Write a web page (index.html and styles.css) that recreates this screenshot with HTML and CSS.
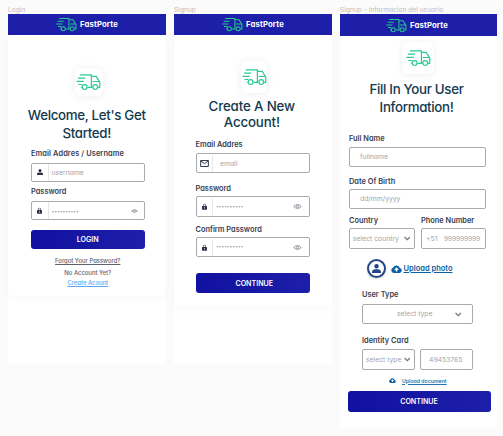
FILE: index.html
```
<!DOCTYPE html>
<html lang="en">
<head>
<meta charset="utf-8">
<title>FastPorte</title>
<link rel="stylesheet" href="styles.css">
</head>
<body>
<svg class="defs" width="0" height="0" aria-hidden="true">
  <symbol id="truck" viewBox="0 0 26 18"><g fill="none" stroke="currentColor" stroke-width="1.25"><path d="M4 1.5H16V14.5H12M2 5H9.5M.5 8.3H8M2.5 11.6H6.5M5 14.5H6M16 3.2H21L24.7 9V14.5H23M16 14.5H17M17.3 8.5H24"/><circle cx="9" cy="14.3" r="2.5"/><circle cx="20" cy="14.3" r="2.5"/></g></symbol>
  <symbol id="lock" viewBox="0 0 16 20"><path fill="currentColor" d="M2 8H3V6a5 5 0 0 1 10 0V8H14a2 2 0 0 1 2 2V18a2 2 0 0 1-2 2H2a2 2 0 0 1-2-2V10a2 2 0 0 1 2-2ZM5 8H11V6a3 3 0 0 0-6 0ZM8 12a2 2 0 1 0 0 4a2 2 0 0 0 0-4Z"/></symbol>
  <symbol id="person" viewBox="0 0 16 16"><path fill="currentColor" d="M8 0a4 4 0 1 1 0 8a4 4 0 0 1 0-8ZM0 16V14C0 10.5 4 9.5 8 9.5S16 10.5 16 14V16Z"/></symbol>
  <symbol id="mail" viewBox="0 0 20 16"><path fill="none" stroke="currentColor" stroke-width="2.2" d="M1.2 1.2H18.8V14.8H1.2ZM1.2 2L10 8.5L18.8 2"/></symbol>
  <symbol id="eye" viewBox="0 0 24 14"><path fill="none" stroke="currentColor" stroke-width="2.2" d="M1.5 7Q12-3.5 22.5 7Q12 17.5 1.5 7Z"/><circle cx="12" cy="7" r="3" fill="none" stroke="currentColor" stroke-width="2"/></symbol>
  <symbol id="chevron" viewBox="0 0 12 8"><path fill="none" stroke="currentColor" stroke-width="2.4" d="M1 1.3L6 6.2L11 1.3"/></symbol>
  <symbol id="cloud" viewBox="0 0 24 17"><path fill="currentColor" fill-rule="evenodd" d="M6 17a6 6 0 0 1-1.2-11.7A7.5 7.5 0 0 1 19 6.5A5.3 5.3 0 0 1 18.5 17ZM12 4.5L6.8 10H10.3V14H13.7V10H17.2Z"/></symbol>
</svg>
<main class="board">
  <section class="screen">
    <div class="frame-name">Login</div>
    <div class="frame">
      <header class="bar"><svg class="bar-logo"><use href="#truck"/></svg><span class="brand">FastPorte</span></header>
      <div class="card login">
        <div class="tile"><svg><use href="#truck"/></svg></div>
        <h1>Welcome, Let's Get<br>Started!</h1>
        <form>
          <label class="address">Email Addres / Username</label>
          <div class="field"><span class="lead"><svg class="i-person"><use href="#person"/></svg></span><span class="value">username</span></div>
          <label>Password</label>
          <div class="field"><span class="lead"><svg class="i-lock"><use href="#lock"/></svg></span><span class="value dots">••••••••••</span><svg class="i-eye"><use href="#eye"/></svg></div>
          <div class="button">LOGIN</div>
        </form>
        <div class="links"><a>Forgot Your Password?</a><span class="noacc">No Account Yet?</span><a class="create">Create Acount</a></div>
      </div>
    </div>
  </section>
  <section class="screen">
    <div class="frame-name">Signup</div>
    <div class="frame">
      <header class="bar"><svg class="bar-logo"><use href="#truck"/></svg><span class="brand">FastPorte</span></header>
      <div class="card signup">
        <div class="tile"><svg><use href="#truck"/></svg></div>
        <h1>Create A New<br>Account!</h1>
        <form>
          <label>Email Addres</label>
          <div class="field"><span class="lead"><svg class="i-mail"><use href="#mail"/></svg></span><span class="value email">email</span></div>
          <label class="pw">Password</label>
          <div class="field"><span class="lead"><svg class="i-lock"><use href="#lock"/></svg></span><span class="value dots">••••••••••</span><svg class="i-eye"><use href="#eye"/></svg></div>
          <label class="confirm">Confirm Password</label>
          <div class="field"><span class="lead"><svg class="i-lock"><use href="#lock"/></svg></span><span class="value dots">••••••••••</span><svg class="i-eye"><use href="#eye"/></svg></div>
          <div class="button">CONTINUE</div>
        </form>
      </div>
    </div>
  </section>
  <section class="screen">
    <div class="frame-name">Signup - informacion del usuario</div>
    <div class="frame tall">
      <header class="bar"><svg class="bar-logo"><use href="#truck"/></svg><span class="brand">FastPorte</span></header>
      <div class="card info">
        <div class="tile"><svg><use href="#truck"/></svg></div>
        <h1>Fill In Your User<br>Information!</h1>
        <form>
          <label>Full Name</label>
          <div class="field"><span class="value indent">fullname</span></div>
          <label class="dob">Date Of Birth</label>
          <div class="field"><span class="value indent">dd/mm/yyyy</span></div>
          <div class="pair">
            <div><label>Country</label><div class="field select"><span>select country</span><svg class="i-chev"><use href="#chevron"/></svg></div></div>
            <div><label>Phone Number</label><div class="field number"><span>+51</span><span class="digits">999999999</span></div></div>
          </div>
        </form>
        <div class="upload"><span class="avatar"><svg><use href="#person"/></svg></span><svg class="i-cloud"><use href="#cloud"/></svg><a class="photo">Upload photo</a></div>
        <div class="inner">
          <label>User Type</label>
          <div class="field type"><span>select type</span><svg class="i-chev"><use href="#chevron"/></svg></div>
          <label class="identity">Identity Card</label>
          <div class="ids"><div class="field select"><span>select type</span><svg class="i-chev"><use href="#chevron"/></svg></div><div class="field idnumber"><span>49453765</span></div></div>
          <div class="document"><svg class="i-cloud small"><use href="#cloud"/></svg><a class="doc">Upload document</a></div>
        </div>
      </div>
      <div class="button wide">CONTINUE</div>
    </div>
  </section>
</main>
</body>
</html>
```
FILE: styles.css
```
* { box-sizing: border-box; }
body { margin: 0; width: 503px; height: 436px; overflow: hidden; background: #fbfbfb; font-family: Inter, "Open Sans", sans-serif; font-feature-settings: "cv11"; color: #394052; }
.defs { display: block; height: 0; }
svg { display: block; flex: none; }
span, a, label { white-space: nowrap; }
.board { display: grid; grid-template-columns: 158px 158px 157px; column-gap: 8px; padding: 4px 0 0 8px; align-items: start; }
.frame-name { height: 10px; line-height: 12px; font-size: 6.6px; color: #bcbcbc; letter-spacing: .03px; white-space: nowrap; }
.frame { height: 350px; background: #fff; }
.tall { height: 414px; }
.bar { display: flex; height: 21px; align-items: center; padding-left: 48px; background: #1d1fa9; color: #fff; }
.bar-logo { width: 21px; height: 15px; color: #23cb8d; }
.brand { margin-left: 3px; font-size: 7.7px; font-weight: 700; letter-spacing: .15px; }
.screen:nth-child(3) .bar { height: 22px; padding-left: 46px; }
.card { border-radius: 0 0 5px 5px; box-shadow: 0 3px 10px #00000007; }
.login { height: 261px; padding: 33px 21.5px 0 23px; }
.signup { height: 271px; padding: 26px 22px 0 21.5px; }
.info { height: 352px; padding: 6px 11px 0 9px; box-shadow: none; }
.tile { display: flex; width: 28px; height: 28px; margin-left: 43.5px; align-items: center; justify-content: center; border-radius: 6px; background: #fff; box-shadow: 0 1px 9px #00000012; color: #2bcb96; }
.tile svg { width: 25px; height: 18px; }
.signup .tile { width: 26px; height: 32px; margin-left: 45.5px; }
.info .tile { width: 32px; height: 32px; margin-left: 53px; }
h1 { margin: 10px -15px 0 -17px; font-size: 13.3px; line-height: 18px; font-weight: 500; letter-spacing: -.32px; text-align: center; color: #12394d; }
.signup h1 { margin-top: 4.5px; line-height: 16.7px; letter-spacing: -.15px; }
.info h1 { margin-top: 5.5px; }
form, .inner { display: flex; flex-direction: column; }
label { display: block; height: 10px; line-height: 10px; font-size: 7.4px; font-weight: 600; color: #394052; }
.address { letter-spacing: .1px; }
.login form { padding-top: 6.5px; }
.login label { margin-bottom: 4px; }
.login .field { height: 19px; }
.login .field + label { margin-top: 5.5px; }
.login .button { height: 19px; margin-top: 10px; }
.field { display: flex; align-items: center; height: 20.5px; border: 1px solid #aaaaad; border-radius: 2px; color: #a3a4ae; font-size: 6.8px; }
.lead { display: flex; width: 16.5px; height: 17px; align-items: center; justify-content: center; border-right: 1px solid #e7e7e9; color: #2b3145; }
.value { margin-left: 3px; }
.i-person { width: 6px; height: 6px; }
.i-lock { width: 5px; height: 7px; }
.i-mail { width: 9px; height: 7px; }
.i-eye { width: 7px; height: 4px; margin-left: auto; margin-right: 6px; color: #777c88; }
.signup .i-eye { width: 9px; height: 5px; margin-right: 7px; }
.value.email { margin-left: 7px; }
.dots { font-size: 5px; letter-spacing: -.1px; }
.signup .dots { padding-bottom: 2px; }
.button { display: flex; align-items: center; justify-content: center; height: 20.5px; border-radius: 3px; background: linear-gradient(90deg, #10119f, #1d1fa9); color: #fff; font-size: 7.1px; font-weight: 600; }
.links { display: flex; flex-direction: column; align-items: center; padding-top: 7px; font-size: 5.9px; line-height: 10px; font-weight: 500; color: #60616f; }
.links a, .photo, .doc { text-decoration: underline; text-underline-offset: 1px; text-decoration-thickness: .5px; }
.noacc { margin-top: 2px; }
.links .create { color: #59a5f5; }
.signup form { padding-top: 9px; }
.signup label { margin-bottom: 3px; }
.signup .pw { margin-top: 11px; margin-bottom: 2px; }
.signup .confirm { margin-top: 8px; margin-bottom: 2px; }
.signup .button { margin-top: 15.5px; padding-left: 3px; }
.info form { padding-top: 18px; }
.info label { margin-bottom: 3px; }
.info .dob { margin-top: 9.5px; margin-bottom: 2px; }
.indent { margin-left: 10px; }
.pair { display: grid; grid-template-columns: 66px 65px; justify-content: space-between; padding-top: 7px; }
.info .pair label { margin-bottom: 2px; }
.select { justify-content: space-between; padding: 0 4px 0 3px; }
.i-chev { width: 6.5px; height: 5px; color: #77797e; }
.number { padding: 0 5px 0 4px; justify-content: space-between; }
.digits { letter-spacing: -.2px; }
.upload { display: flex; height: 20px; margin-top: 10px; padding-left: 18px; align-items: center; }
.avatar { display: flex; width: 19px; height: 19px; align-items: center; justify-content: center; border: 2px solid #244585; border-radius: 50%; color: #244585; box-shadow: 0 1px 2px #0003; }
.avatar svg { width: 9px; height: 9px; }
.i-cloud { width: 11px; height: 8px; margin-left: 5px; color: #0960a4; }
.photo { margin-left: 1.5px; font-size: 7.5px; font-weight: 600; color: #0960a4; }
.inner { padding: 11px 13px 0; width: 137px; }
.inner .field { margin-top: 1px; }
.type { position: relative; padding-left: 34px; }
.type .i-chev { position: absolute; right: 11px; top: 7px; }
.inner .identity { margin-top: 11.5px; margin-bottom: 3.5px; }
.ids { display: grid; grid-template-columns: 53px 53px; justify-content: space-between; }
.ids .field { margin-top: 0; }
.idnumber { padding-left: 8px; }
.document { display: flex; align-items: center; height: 10px; margin-top: 6px; padding-left: 27px; }
.small { width: 7px; height: 5px; margin-left: 0; }
.doc { margin-left: 6px; color: #2475ab; font-size: 5.2px; font-weight: 600; }
.wide { margin: 3px 6.5px 0 7.5px; }
```
